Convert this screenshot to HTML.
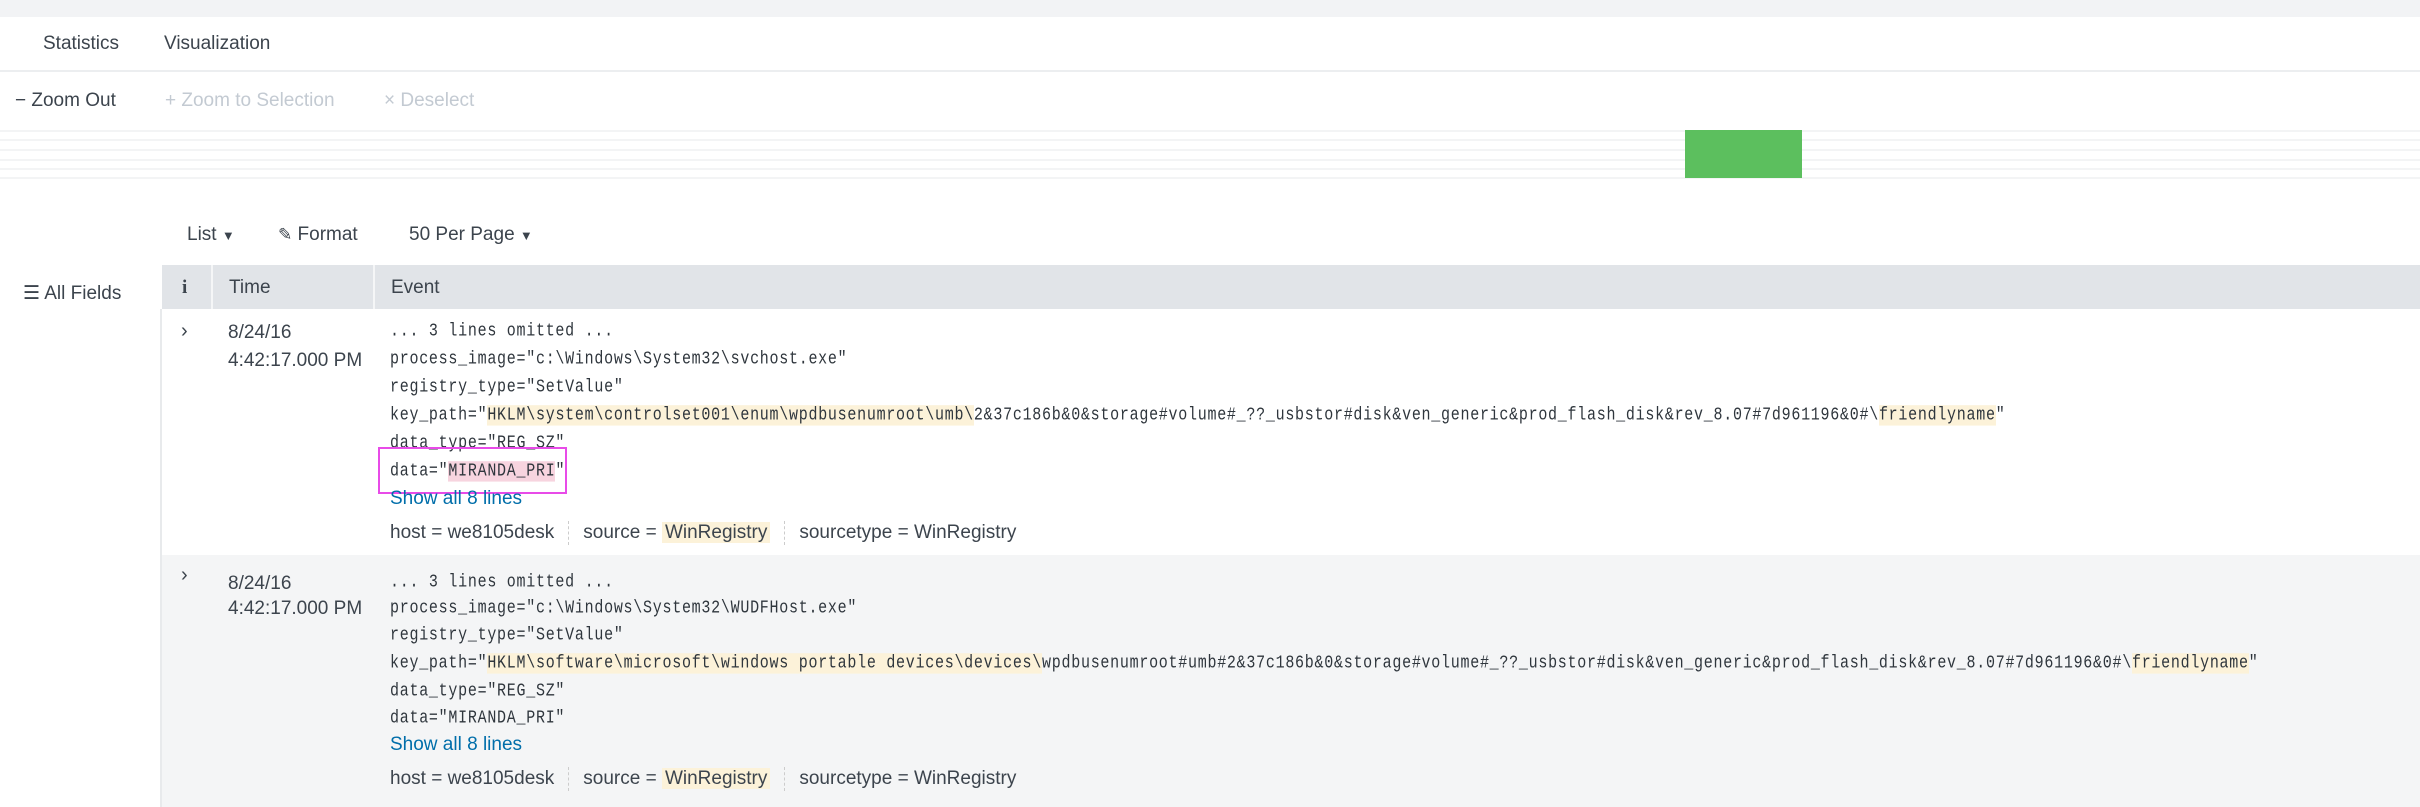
<!DOCTYPE html>
<html><head><meta charset="utf-8"><style>
*{margin:0;padding:0;box-sizing:border-box}
body{width:2420px;height:807px;overflow:hidden;background:#fff;font-family:"Liberation Sans",sans-serif;color:#3c444d;position:relative}
.abs{position:absolute;white-space:nowrap}
.top{position:absolute;left:0;top:0;width:2420px;height:17px;background:#f2f3f5}
.sep{position:absolute;left:0;top:70px;width:2420px;height:2px;background:#eceef0}
.t{font-size:19px;line-height:22px}
.stripe{position:absolute;left:0;width:2420px;height:2px;background:#f3f4f5}
.green{position:absolute;left:1685px;top:130px;width:117px;height:48px;background:#5cbf5e}
.hdr{position:absolute;left:162px;top:265px;width:2258px;height:44px;background:#e1e4e8}
.hdr div{position:absolute;top:1px;height:44px;line-height:44px;font-size:19px}
.vl{position:absolute;top:0;width:2px;height:44px;background:#f5f6f7}
.row2{position:absolute;left:162px;top:555px;width:2258px;height:252px;background:#f4f5f6}
.lp{position:absolute;left:160px;top:309px;width:2px;height:498px;background:#e8eaec}
.mono{font-family:"Liberation Mono",monospace;font-size:15px;letter-spacing:0.73px;color:#2f363d;line-height:28px;transform:scaleY(1.2);transform-origin:left center}
.hl{background:#fcf2d9}
.pk{background:#f7d4df}
.ln{position:absolute;left:390px;white-space:nowrap}
.kv{font-size:19px;line-height:28px}
.kv .d{display:inline-block;width:0;height:24px;border-left:1px dashed #ccc;vertical-align:middle;margin:0 14px}
.link{color:#006eaa;font-size:19px;line-height:28px}
.chev{font-size:20px;color:#3c444d}
</style></head><body>
<div class="top"></div>
<div class="abs t" style="left:43px;top:33px">Statistics</div>
<div class="abs t" style="left:164px;top:33px">Visualization</div>
<div class="sep"></div>
<div class="abs t" style="left:15px;top:90px">− Zoom Out</div>
<div class="abs t" style="left:165px;top:90px;color:#c3cad2">+ Zoom to Selection</div>
<div class="abs t" style="left:384px;top:90px;color:#c3cad2">× Deselect</div>
<div class="stripe" style="top:130px"></div>
<div class="stripe" style="top:139px"></div>
<div class="stripe" style="top:149px"></div>
<div class="stripe" style="top:159px"></div>
<div class="stripe" style="top:168px"></div>
<div class="stripe" style="top:177px"></div>
<div class="green"></div>
<div class="abs t" style="left:187px;top:224px">List <span style="font-size:13px">▼</span></div>
<div class="abs t" style="left:278px;top:224px"><span style="font-size:17px">✎</span> Format</div>
<div class="abs t" style="left:409px;top:224px">50 Per Page <span style="font-size:13px">▼</span></div>
<div class="abs t" style="left:23px;top:283px">☰ All Fields</div>
<div class="hdr">
 <div style="left:20px;font-family:'Liberation Serif',serif;font-weight:bold">i</div>
 <div class="vl" style="left:49px;top:0"></div>
 <div style="left:67px">Time</div>
 <div class="vl" style="left:211px;top:0"></div>
 <div style="left:229px">Event</div>
</div>
<div class="row2"></div>
<div class="lp"></div>

<div class="abs chev" style="left:181px;top:320px">›</div>
<div class="abs t" style="left:228px;top:322px">8/24/16</div>
<div class="abs t" style="left:228px;top:350px">4:42:17.000 PM</div>
<div class="ln mono" style="top:318px">... 3 lines omitted ...</div>
<div class="ln mono" style="top:346px">process_image="c:\Windows\System32\svchost.exe"</div>
<div class="ln mono" style="top:374px">registry_type="SetValue"</div>
<div class="ln mono" style="top:402px">key_path="<span class="hl">HKLM\system\controlset001\enum\wpdbusenumroot\umb\</span>2&amp;37c186b&amp;0&amp;storage#volume#_??_usbstor#disk&amp;ven_generic&amp;prod_flash_disk&amp;rev_8.07#7d961196&amp;0#\<span class="hl">friendlyname</span>"</div>
<div class="ln mono" style="top:430px">data_type="REG_SZ"</div>
<div class="ln mono" style="top:458px">data="<span class="pk">MIRANDA_PRI</span>"</div>
<div class="abs" style="left:378px;top:447px;width:189px;height:47px;border:2px solid #e84be8"></div>
<div class="ln link" style="top:485px">Show all 8 lines</div>
<div class="ln kv" style="top:519px">host = we8105desk<span class="d"></span>source = <span class="hl" style="padding:0 3px">WinRegistry</span><span class="d"></span>sourcetype = WinRegistry</div>

<div class="abs chev" style="left:181px;top:564px">›</div>
<div class="abs t" style="left:228px;top:573px">8/24/16</div>
<div class="abs t" style="left:228px;top:598px">4:42:17.000 PM</div>
<div class="ln mono" style="top:569px">... 3 lines omitted ...</div>
<div class="ln mono" style="top:595px">process_image="c:\Windows\System32\WUDFHost.exe"</div>
<div class="ln mono" style="top:622px">registry_type="SetValue"</div>
<div class="ln mono" style="top:650px">key_path="<span class="hl">HKLM\software\microsoft\windows portable devices\devices\</span>wpdbusenumroot#umb#2&amp;37c186b&amp;0&amp;storage#volume#_??_usbstor#disk&amp;ven_generic&amp;prod_flash_disk&amp;rev_8.07#7d961196&amp;0#\<span class="hl">friendlyname</span>"</div>
<div class="ln mono" style="top:678px">data_type="REG_SZ"</div>
<div class="ln mono" style="top:705px">data="MIRANDA_PRI"</div>
<div class="ln link" style="top:731px">Show all 8 lines</div>
<div class="ln kv" style="top:765px">host = we8105desk<span class="d"></span>source = <span class="hl" style="padding:0 3px">WinRegistry</span><span class="d"></span>sourcetype = WinRegistry</div>
</body></html>
